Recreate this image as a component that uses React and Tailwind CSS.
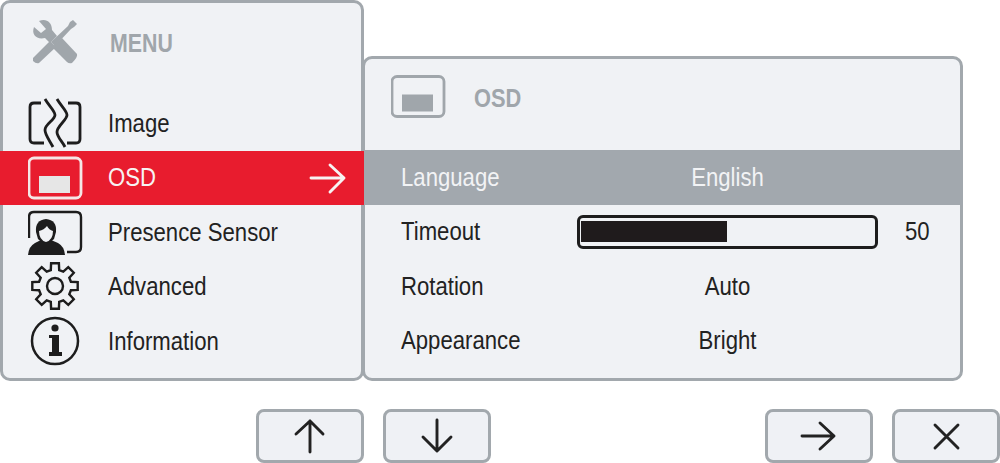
import React from "react";

const gearPath = () => {
  const cx = 55;
  const cy = 285;
  const pts = [];
  for (let i = 0; i < 8; i++) {
    const a = (i * Math.PI) / 4 - Math.PI / 2;
    const add = (r, t) =>
      pts.push(`${(cx + r * Math.cos(a + t)).toFixed(1)} ${(cy + r * Math.sin(a + t)).toFixed(1)}`);
    add(16.5, -0.26);
    add(23, -0.17);
    add(23, 0.17);
    add(16.5, 0.26);
  }
  return `M${pts.join(" L")} Z`;
};

// icons below use page coordinates in their viewBox
const ToolsIcon = () => (
  <svg width="56" height="54" viewBox="28 16 56 54" className="shrink-0">
    <path
      d="M34 27 L41 33 L46 29 L39 21 C46 18 52 22 52 30 L57 36 L50 43 L45 38 C37 40 31 35 34 27 Z"
      fill="#a0a6ab"
    />
    <path d="M57 43 L62 38 L77 54 Q78 57 72 63 Q69 64 67 62 L52 47 Z" fill="#a0a6ab" />
    <path d="M33 58 L50 41 L56 47 L39 63 Q36 64 33 61 Z" fill="#a0a6ab" />
    <path d="M51 42 L68 26 L70 22 L73 20 L77 24 L74 27 L71 29 L55 46 Z" fill="#a0a6ab" />
  </svg>
);

const ImageIcon = () => (
  <svg width="56" height="54" viewBox="28 96 56 54" fill="none" stroke="#1d1d1d" strokeWidth="2.8" className="shrink-0">
    <path d="M41 103 H34 Q30 103 30 107 V139 Q30 143 34 143 H44" />
    <path d="M68 103 H76 Q80 103 80 107 V139 Q80 143 76 143 H67" />
    <path d="M45 99 C49 106 55 111 55 115 C55 120 45 124 45 130 C45 135 50 141 53 147" />
    <path d="M57 99 C61 106 67 111 67 115 C67 120 57 126 57 132 C57 137 62 141 65 147" />
  </svg>
);

const OsdIcon = ({ stroke, fill, box }) => (
  <svg width="56" height="54" viewBox={box} fill="none" className="shrink-0">
    <rect x="29" y="158" width="52" height="40" rx="5" stroke={stroke} strokeWidth="2.8" />
    <rect x="39" y="176" width="31" height="17" fill={fill} />
  </svg>
);

const SensorIcon = () => (
  <svg width="56" height="54" viewBox="28 205 56 54" fill="none" className="shrink-0">
    <path d="M29 238 V217 Q29 212 34 212 H76 Q81 212 81 217 V247 Q81 252 76 252 H67" stroke="#1d1d1d" strokeWidth="2.4" />
    <path d="M28 255 Q29 246 35 243 L41 240 H51 L58 243 Q64 246 65 255 Z" fill="#1d1d1d" />
    <path d="M36 232 Q35 220 46 219 Q57 220 56 232 L54 239 Q50 243 46 243 Q42 243 38 239 Z" fill="#1d1d1d" />
    <path d="M39 231 Q44 230 47 226 Q49 230 53 231 Q53 240 46 242 Q39 240 39 231 Z" fill="#f0f2f5" />
  </svg>
);

const GearIcon = () => (
  <svg width="56" height="54" viewBox="28 259 56 54" fill="none" stroke="#1d1d1d" strokeWidth="2.4" className="shrink-0">
    <path d={gearPath()} strokeLinejoin="miter" />
    <circle cx="55" cy="285" r="8" />
  </svg>
);

const InfoIcon = () => (
  <svg width="56" height="54" viewBox="28 314 56 54" fill="none" className="shrink-0">
    <circle cx="55" cy="341" r="23" stroke="#1d1d1d" strokeWidth="2.5" />
    <circle cx="55" cy="328" r="3.6" fill="#1d1d1d" />
    <path d="M49 335 H59 V352 H62 V356 H49 V352 H52 V338 H49 Z" fill="#1d1d1d" />
  </svg>
);

const Arrow = ({ d, w = 44, h = 40, box, color = "#222" }) => (
  <svg width={w} height={h} viewBox={box} fill="none" stroke={color} strokeWidth="2.9" strokeLinecap="round" strokeLinejoin="round">
    <path d={d} />
  </svg>
);

const MenuRow = ({ icon, label, active }) => (
  <div
    className={`flex h-[54.5px] items-center ${
      active ? "-mx-[3px] pl-[28px] bg-[#e81c2e] text-[#f7f3f3]" : "pl-[25px] text-[#222]"
    }`}
  >
    {icon}
    <span className="ml-6 origin-left scale-x-[0.852] whitespace-nowrap text-[26px]">{label}</span>
    {active && (
      <span className="ml-auto mr-[17px] flex">
        <Arrow box="310 157 38 40" w={38} h={40} d="M312 177 H345 M331 164 L345 177 L331 191" color="#f7f3f3" />
      </span>
    )}
  </div>
);

const SettingRow = ({ label, active, children }) => (
  <div
    className={`flex h-[54.5px] items-center ${
      active ? "-mx-[3px] pl-[39px] bg-[#a2a8ae] text-[#f2f3f5]" : "pl-[36px] text-[#222]"
    }`}
  >
    <span className="w-[176px] shrink-0 origin-left scale-x-[0.852] whitespace-nowrap text-[26px]">{label}</span>
    {children}
  </div>
);

const Value = ({ children }) => (
  <span className="w-[301px] scale-x-[0.852] text-center text-[26px]">{children}</span>
);

const Button = ({ children }) => (
  <div className="flex h-[54px] w-[108px] items-center justify-center rounded-[8px] border-[3px] border-[#a2a8ad] bg-[#eff1f5]">
    {children}
  </div>
);

export default function App() {
  return (
    <div className="h-[463px] w-[1000px] overflow-hidden bg-white font-['Liberation_Sans',Arial,sans-serif]">
      <div className="flex items-start">
        <div className="relative z-10 h-[381px] w-[364px] shrink-0 rounded-[10px] border-[3px] border-[#a2a8ad] bg-[#f0f2f5]">
          <div className="flex h-[93px] items-center pb-[13px] pl-[25px]">
            <ToolsIcon />
            <span className="ml-[26px] origin-left scale-x-[0.82] text-[26px] font-bold text-[#a0a6ab]">MENU</span>
          </div>
          <MenuRow icon={<ImageIcon />} label="Image" />
          <MenuRow active icon={<OsdIcon box="28 151 56 54" stroke="#f5e6e6" fill="#e6e6e6" />} label="OSD" />
          <MenuRow icon={<SensorIcon />} label="Presence Sensor" />
          <MenuRow icon={<GearIcon />} label="Advanced" />
          <MenuRow icon={<InfoIcon />} label="Information" />
        </div>

        <div className="-ml-[2px] mt-[56px] h-[325px] w-[601px] shrink-0 rounded-[10px] border-[3px] border-[#a2a8ad] bg-[#f0f2f5]">
          <div className="flex h-[91px] items-center pb-[13px] pl-[26px]">
            <OsdIcon box="28 152.5 56 54" stroke="#a0a6ab" fill="#a0a6ab" />
            <span className="ml-[27px] origin-left scale-x-[0.84] text-[26px] font-bold text-[#a0a6ab]">OSD</span>
          </div>
          <SettingRow active label="Language">
            <Value>English</Value>
          </SettingRow>
          <SettingRow label="Timeout">
            <div className="flex h-[34px] w-[301px] shrink-0 items-center rounded-[6px] border-[3px] border-[#1d1d1d] px-px">
              <div className="h-[21px] w-[146px] bg-[#1f1b1c]" />
            </div>
            <span className="ml-[27px] origin-left scale-x-[0.852] text-[26px]">50</span>
          </SettingRow>
          <SettingRow label="Rotation">
            <Value>Auto</Value>
          </SettingRow>
          <SettingRow label="Appearance">
            <Value>Bright</Value>
          </SettingRow>
        </div>
      </div>

      <div className="mt-[28px] flex pl-[256px]">
        <div className="flex gap-[19px]">
          <Button>
            <Arrow box="288 416 44 40" d="M310 452 V421 M296 434 L310 421 L323 434" />
          </Button>
          <Button>
            <Arrow box="415 416 44 40" d="M437 420 V451 M423 437 L437 451 L451 437" />
          </Button>
        </div>
        <div className="ml-[274px] flex gap-[19px]">
          <Button>
            <Arrow box="797 416 44 40" d="M802 436 H834 M820 423 L834 436 L820 449" />
          </Button>
          <Button>
            <Arrow box="923 416 44 40" d="M934 425 L957 448 M957 425 L934 448" />
          </Button>
        </div>
      </div>
    </div>
  );
}
